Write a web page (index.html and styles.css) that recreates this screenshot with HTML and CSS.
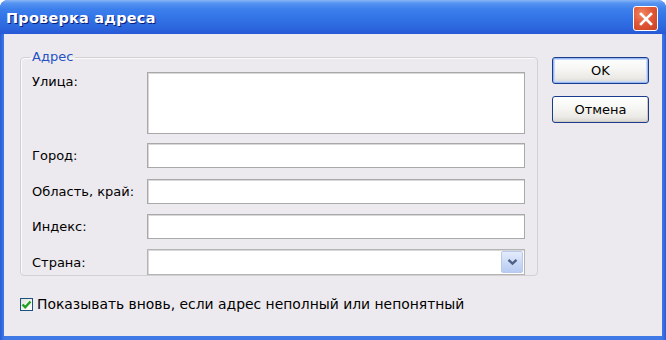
FILE: index.html
```html
<!DOCTYPE html>
<html lang="ru">
<head>
<meta charset="utf-8">
<title>Проверка адреса</title>
<link rel="stylesheet" href="styles.css">
</head>
<body>
<div class="window">
  <div class="titlebar">
    <span class="title">Проверка адреса</span>
    <button class="close" aria-label="Закрыть">
      <svg width="16" height="16" viewBox="0 0 16 16"><path d="M3 3 L13 13 M13 3 L3 13" stroke="#fff" stroke-width="2.6" stroke-linecap="square"/></svg>
    </button>
  </div>
  <div class="client">
    <div class="main">
      <fieldset class="group">
        <legend class="legend">Адрес</legend>
        <div class="form">
          <label class="lbl lbl-top">Улица:</label>
          <div class="field area"></div>
          <label class="lbl">Город:</label>
          <div class="field"></div>
          <label class="lbl">Область, край:</label>
          <div class="field"></div>
          <label class="lbl">Индекс:</label>
          <div class="field"></div>
          <label class="lbl">Страна:</label>
          <div class="field combo">
            <span class="drop">
              <svg width="11" height="8" viewBox="0 0 11 8"><path d="M1.5 1.8 L5.5 5.6 L9.5 1.8" fill="none" stroke="#4d6185" stroke-width="2.4"/></svg>
            </span>
          </div>
        </div>
      </fieldset>
      <div class="buttons">
        <button class="btn default">OK</button>
        <button class="btn">Отмена</button>
      </div>
    </div>
    <div class="check-row">
      <span class="checkbox">
        <svg width="11" height="11" viewBox="0 0 11 11"><path d="M1.5 5.5 L4.2 8.2 L9.5 2.5" fill="none" stroke="#21a121" stroke-width="2.4"/></svg>
      </span>
      <span class="check-label">Показывать вновь, если адрес неполный или непонятный</span>
    </div>
  </div>
</div>
</body>
</html>
```
FILE: styles.css
```css
html, body {
  margin: 0;
  padding: 0;
  background: #fff;
}
body {
  font-family: "DejaVu Sans", "Noto Sans", sans-serif;
  font-size: 13px;
  color: #000;
}
.window {
  width: 666px;
  height: 340px;
  display: flex;
  flex-direction: column;
  background: linear-gradient(90deg, #2a5cd6 0, #3f79e6 4px, #3f79e6 662px, #2a5cd6 666px);
  border-radius: 8px 8px 0 0;
  overflow: hidden;
  box-sizing: border-box;
}
.titlebar {
  height: 34px;
  flex: none;
  display: flex;
  align-items: center;
  justify-content: space-between;
  padding: 0 8px 0 6px;
  background: linear-gradient(180deg, #8ab6f7 0, #5795f2 3px, #3c80ec 9px, #3273e6 18px, #2c66de 28px, #2758d5 34px);
}
.title {
  color: #fff;
  font-family: "DejaVu Sans", sans-serif;
  font-weight: bold;
  font-size: 14.5px;
  letter-spacing: 0.2px;
  text-shadow: 1px 1px 0 #0a1d7a;
  padding-top: 1px;
}
.close {
  width: 25px;
  height: 25px;
  margin-top: 3px;
  padding: 0;
  border: 1px solid #fff;
  border-radius: 3px;
  background: radial-gradient(circle at 35% 30%, #f08a62 0, #e2593a 45%, #c8401f 100%);
  display: flex;
  align-items: center;
  justify-content: center;
}
.client {
  flex: 1;
  margin: 0 4px 4px 4px;
  background: #eceaee;
  padding: 16px 13px 0 16px;
  display: flex;
  flex-direction: column;
}
.main {
  display: flex;
  align-items: flex-start;
  gap: 14px;
}
.group {
  width: 518px;
  height: 226px;
  box-sizing: border-box;
  margin: 0;
  padding: 0 12px 0 11px;
  border: 1px solid #d3d0d4;
  border-radius: 4px;
  box-shadow: inset 1px 1px 0 #fafafa;
}
.legend {
  color: #2452c4;
  padding: 0 2px;
  margin-left: -2px;
  line-height: 14px;
}
.form {
  display: grid;
  grid-template-columns: 115px 1fr;
  grid-template-rows: 62px 25px 25px 25px 26px;
  row-gap: 10px;
  align-items: center;
  margin-top: 8px;
}
.form .area + .lbl,
.form .area + .lbl + .field {
  margin-top: -2px;
}
.lbl {
  color: #000;
  white-space: nowrap;
}
.lbl-top {
  align-self: start;
  padding-top: 2px;
}
.field {
  height: 100%;
  box-sizing: border-box;
  background: #fff;
  border: 1px solid #a9a9a9;
  box-shadow: inset 1px 1px 0 #d8d8d8;
}
.combo {
  position: relative;
  border-color: #b4b4b4;
}
.drop {
  position: absolute;
  right: 1px;
  top: 1px;
  width: 22px;
  height: 22px;
  box-sizing: border-box;
  border: 1px solid #b9c9ec;
  border-radius: 2px;
  background: linear-gradient(180deg, #e4ecfc 0, #c8d7f5 60%, #b8cbf2 100%);
  display: flex;
  align-items: center;
  justify-content: center;
}
.buttons {
  display: flex;
  flex-direction: column;
  gap: 12px;
  margin-top: 7px;
}
.btn {
  width: 97px;
  height: 27px;
  padding: 0;
  font-family: "DejaVu Sans", sans-serif;
  font-size: 13px;
  color: #000;
  border: 1px solid #1b3c8c;
  border-radius: 3px;
  background: linear-gradient(180deg, #ffffff 0, #f7f7f5 40%, #eceae6 80%, #d8d5d0 100%);
  box-shadow: inset -1px -1px 0 #d0ccc4;
}
.btn.default {
  box-shadow: inset 0 0 0 1px #98b8f2, inset 0 0 0 2px #c8dafb;
}
.check-row {
  display: flex;
  align-items: center;
  gap: 4px;
  margin-top: 20px;
}
.check-label {
  font-size: 13.9px;
}
.checkbox {
  width: 13px;
  height: 13px;
  box-sizing: border-box;
  border: 1px solid #1c5180;
  background: linear-gradient(135deg, #e0e0db 0, #f5f5f1 60%, #ffffff 100%);
  display: flex;
  align-items: center;
  justify-content: center;
}
```
